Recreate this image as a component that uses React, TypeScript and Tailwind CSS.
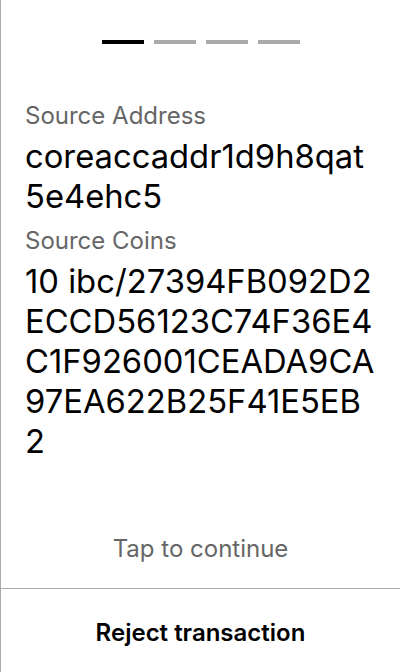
export default function App() {
  const steps = [true, false, false, false];

  return (
    <div
      className="flex h-[672px] w-[400px] flex-col border-l border-[#aaaaaa] bg-white text-black"
      style={{ fontFamily: 'Inter, "Noto Sans", sans-serif' }}
    >
      {/* Step indicator */}
      <div className="flex justify-center gap-[10px] pt-10">
        {steps.map((active, i) => (
          <div key={i} className={`h-1 w-[42px] ${active ? 'bg-black' : 'bg-[#aaaaaa]'}`} />
        ))}
      </div>

      {/* Details */}
      <div className="flex-1 px-6 pt-[57px]">
        <p className="text-[24px] leading-[30px] text-[#666666]">Source Address</p>
        <p className="mt-[5px] break-all text-[32.75px] leading-[40px]">coreaccaddr1d9h8qat5e4ehc5</p>

        <p className="mt-[10px] text-[24px] leading-[30px] text-[#666666]">Source Coins</p>
        <p className="mt-[5px] break-all text-[32.75px] leading-[40px]">
          10 ibc/27394FB092D2ECCD56123C74F36E4C1F926001CEADA9CA97EA622B25F41E5EB2
        </p>
      </div>

      <button className="pb-[24px] text-center text-[24px] leading-[30px] text-[#666666]">Tap to continue</button>

      {/* Footer */}
      <div className="flex justify-center border-t border-[#aaaaaa] pb-[24px] pt-[29px]">
        <button className="text-[24px] font-semibold leading-[30px]">Reject transaction</button>
      </div>
    </div>
  );
}
